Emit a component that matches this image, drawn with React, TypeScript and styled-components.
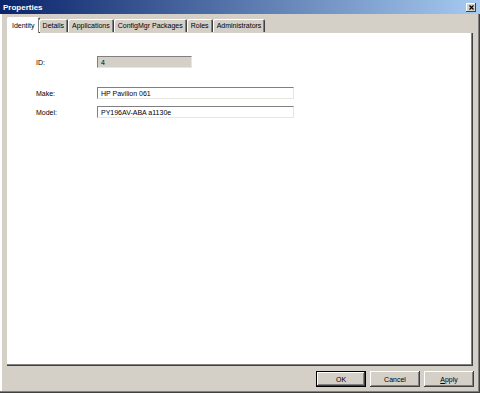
import React from "react";
import styled, { createGlobalStyle } from "styled-components";

const GlobalStyle = createGlobalStyle`
  html, body {
    margin: 0;
    padding: 0;
    background: #d4d0c8;
  }
  #root {
    width: 480px;
    height: 393px;
  }
`;

const Window = styled.div`
  width: 480px;
  height: 393px;
  box-sizing: border-box;
  display: flex;
  flex-direction: column;
  background: #d4d0c8;
  box-shadow: inset -1px -1px #404040, inset -2px -2px #808080,
    inset 2px 0 #ffffff;
  font-family: "Liberation Sans", Arial, sans-serif;
  font-size: 7px;
  color: #000;
  overflow: hidden;
`;

const TitleBar = styled.div`
  height: 14px;
  flex: none;
  display: flex;
  align-items: center;
  justify-content: space-between;
  padding: 0 4px 0 3px;
  background: linear-gradient(to right, #0a246a, #a6caf0);
  color: #fff;
  font-weight: bold;
  font-size: 8px;
`;

const CloseButton = styled.div`
  width: 10px;
  height: 9px;
  display: flex;
  align-items: center;
  justify-content: center;
  background: #d4d0c8;
  box-shadow: inset -1px -1px #404040, inset 1px 1px #ffffff;
`;

const Body = styled.div`
  flex: 1;
  display: flex;
  flex-direction: column;
  padding: 3px 7px 0 7px;
  min-height: 0;
`;

const TabStrip = styled.div`
  height: 16px;
  flex: none;
  display: flex;
  align-items: flex-end;
  position: relative;
  z-index: 1;
`;

const Tab = styled.div<{ $active?: boolean }>`
  height: ${(p) => (p.$active ? "16px" : "13px")};
  margin: ${(p) => (p.$active ? "0 -1px 0 0" : "0 0 1px 0")};
  padding: ${(p) => (p.$active ? "0 5px 0 5px" : "0 4px")};
  box-sizing: border-box;
  display: flex;
  align-items: center;
  white-space: nowrap;
  background: ${(p) => (p.$active ? "#ffffff" : "#d4d0c8")};
  box-shadow: inset 1px 1px #ffffff, inset -1px 0 #404040,
    inset -2px 0 #808080;
  border-radius: 2px 2px 0 0;
`;

const Panel = styled.div`
  flex: 1;
  background: #fff;
  box-shadow: inset -1px -1px #404040, inset -2px -2px #808080;
  padding: 23px 0 0 29px;
`;

const Form = styled.div`
  display: flex;
  flex-direction: column;
`;

const Row = styled.div<{ $after: number }>`
  display: flex;
  align-items: center;
  margin-bottom: ${(p) => p.$after}px;
`;

const Label = styled.div`
  width: 61px;
`;

const Field = styled.div<{ $width: number; $disabled?: boolean }>`
  width: ${(p) => p.$width}px;
  height: 12px;
  box-sizing: border-box;
  display: flex;
  align-items: center;
  padding-left: 3px;
  background: ${(p) => (p.$disabled ? "#d4d0c8" : "#ffffff")};
  border-top: 1px solid #808080;
  border-left: 1px solid #808080;
  border-right: 1px solid #e8e6e0;
  border-bottom: 1px solid #e8e6e0;
`;

const ButtonRow = styled.div`
  height: 27px;
  flex: none;
  display: flex;
  justify-content: flex-end;
  align-items: flex-start;
  gap: 4px;
  padding: 5px 6px 0 0;
  box-sizing: border-box;
`;

const Button = styled.div<{ $default?: boolean }>`
  width: 50px;
  height: 16px;
  box-sizing: border-box;
  display: flex;
  align-items: center;
  justify-content: center;
  background: #d4d0c8;
  border: ${(p) => (p.$default ? "1px solid #000" : "none")};
  box-shadow: inset -1px -1px #404040, inset 1px 1px #ffffff,
    inset -2px -2px #808080;
`;

const tabs = [
  "Identity",
  "Details",
  "Applications",
  "ConfigMgr Packages",
  "Roles",
  "Administrators",
];

export default function App() {
  return (
    <>
      <GlobalStyle />
      <Window>
        <TitleBar>
          <span>Properties</span>
          <CloseButton>
            <svg width="5" height="5" viewBox="0 0 5 5">
              <path d="M0.5 0.5 L4.5 4.5 M4.5 0.5 L0.5 4.5" stroke="#000" strokeWidth="1.2" />
            </svg>
          </CloseButton>
        </TitleBar>
        <Body>
          <TabStrip>
            {tabs.map((t, i) => (
              <Tab key={t} $active={i === 0}>
                {t}
              </Tab>
            ))}
          </TabStrip>
          <Panel>
            <Form>
              <Row $after={19}>
                <Label>ID:</Label>
                <Field $width={95} $disabled>
                  4
                </Field>
              </Row>
              <Row $after={7}>
                <Label>Make:</Label>
                <Field $width={197}>HP Pavilion 061</Field>
              </Row>
              <Row $after={0}>
                <Label>Model:</Label>
                <Field $width={197}>PY196AV-ABA a1130e</Field>
              </Row>
            </Form>
          </Panel>
        </Body>
        <ButtonRow>
          <Button $default>OK</Button>
          <Button>Cancel</Button>
          <Button>
            <span>
              <u>A</u>pply
            </span>
          </Button>
        </ButtonRow>
      </Window>
    </>
  );
}
